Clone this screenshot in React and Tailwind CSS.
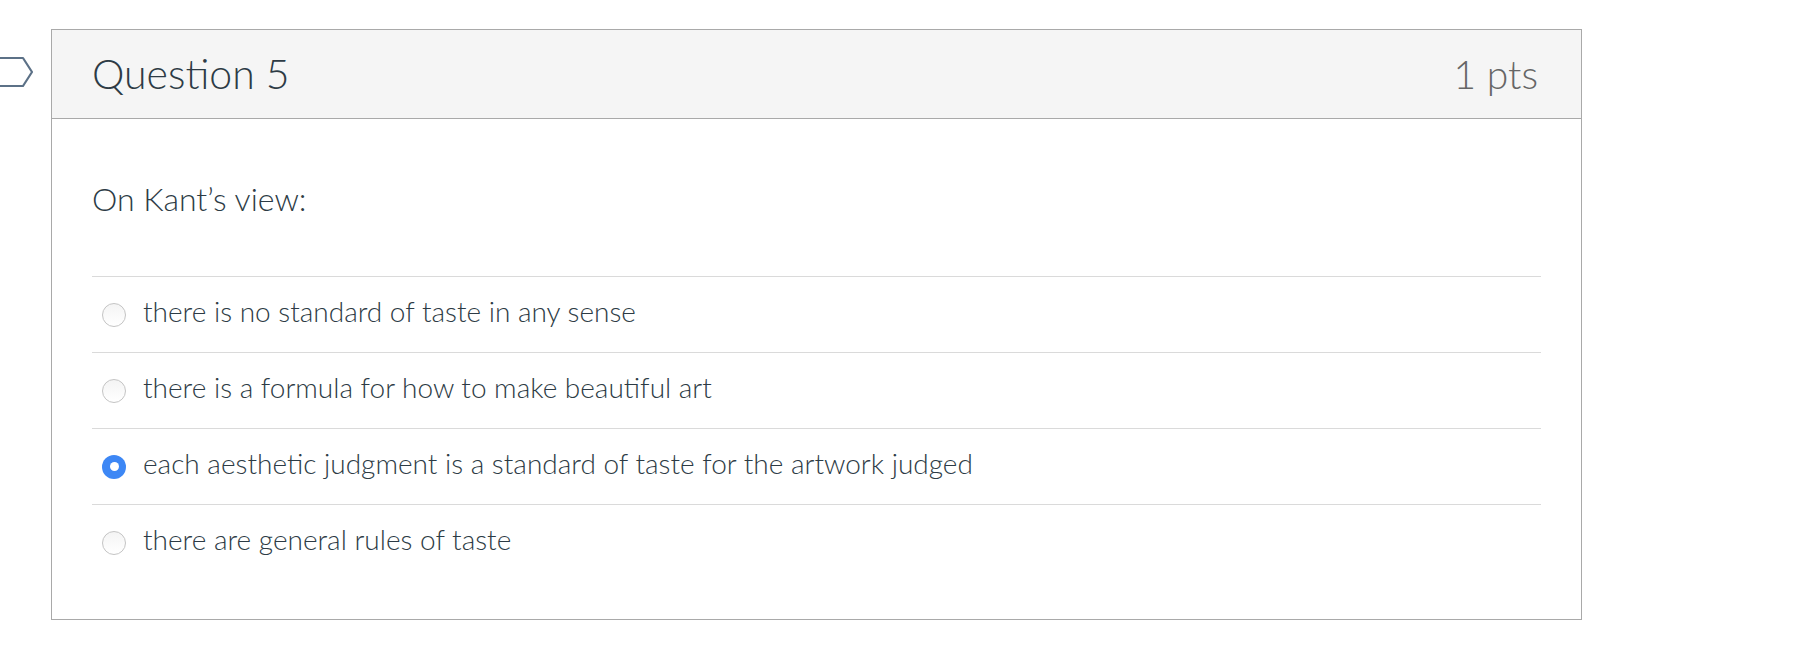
import React from "react";

const options = [
  { text: "there is no standard of taste in any sense", checked: false },
  { text: "there is a formula for how to make beautiful art", checked: false },
  { text: "each aesthetic judgment is a standard of taste for the artwork judged", checked: true },
  { text: "there are general rules of taste", checked: false },
];

const Radio = ({ checked }) =>
  checked ? (
    <span className="flex h-[24px] w-[24px] shrink-0 items-center justify-center rounded-full bg-[#3d87f5]">
      <span className="h-[9px] w-[9px] rounded-full bg-white" />
    </span>
  ) : (
    <span className="h-[24px] w-[24px] shrink-0 rounded-full border border-[#c4c4c4] bg-gradient-to-b from-[#f4f4f4] to-white" />
  );

const App = () => {
  return (
    <div className="relative h-[646px] w-[1810px] overflow-hidden bg-white font-['Lato','Liberation_Sans',sans-serif] font-light">
      {/* question flag, cut off at the left edge */}
      <svg className="absolute left-0 top-[56px]" width="36" height="34" viewBox="0 0 36 34">
        <path d="M-4 2 H23 L32 16 L23 30 H-4" fill="none" stroke="#5c7187" strokeWidth="2.2" strokeLinejoin="round" />
      </svg>

      <div className="ml-[51px] mt-[29px] w-[1531px] border border-[#a9a9a9]">
        <div className="flex h-[89px] items-center justify-between border-b border-[#a9a9a9] bg-[#f5f5f5] pl-10 pr-[43px]">
          <h2 className="text-[41px] text-[#2d3b45]">Question 5</h2>
          <span className="text-[39px] text-[#666666]">1 pts</span>
        </div>

        <div className="px-10 pb-[39px] pt-[56px]">
          <p className="mb-[54px] text-[32px] leading-[47px] text-[#2d3b45]">On Kant’s view:</p>
          <div>
            {options.map((o, i) => (
              <label key={i} className="flex h-[76px] items-center gap-[17px] border-t border-[#dadada] pl-[10px]">
                <Radio checked={o.checked} />
                <span className="pb-[8px] text-[28px] text-[#2d3b45]">{o.text}</span>
              </label>
            ))}
          </div>
        </div>
      </div>
    </div>
  );
};

export default App;
